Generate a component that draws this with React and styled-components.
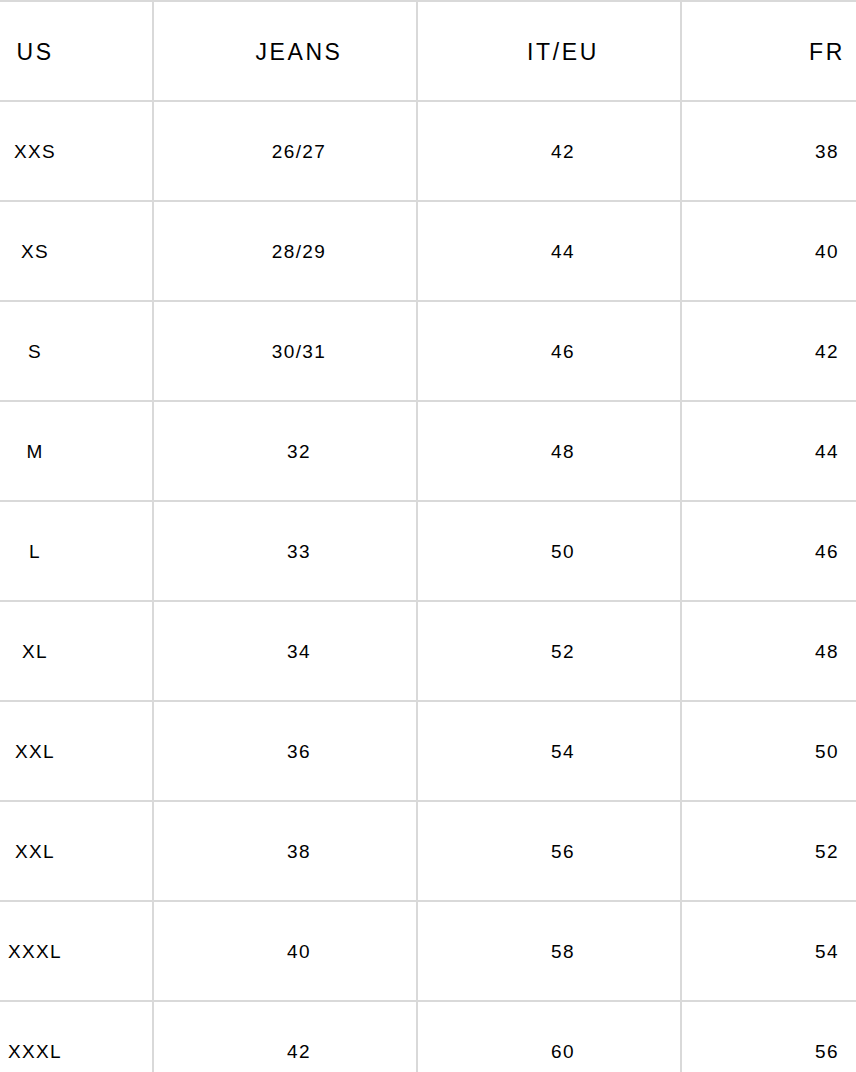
import React from "react";
import styled, { createGlobalStyle } from "styled-components";

const GlobalStyle = createGlobalStyle`
  html, body {
    margin: 0;
    padding: 0;
    background: #fff;
    overflow: hidden;
  }
  body {
    font-family: "Liberation Sans", Arial, sans-serif;
    color: #000;
  }
`;

const Viewport = styled.div`
  width: 856px;
  overflow: hidden;
`;

const SizeGrid = styled.div`
  display: grid;
  grid-template-columns: repeat(4, 264px);
  width: max-content;
  margin-left: -112px;
  border-top: 2px solid #d9d9d9;
  border-left: 2px solid #d9d9d9;
`;

const Cell = styled.div`
  box-sizing: border-box;
  height: 100px;
  display: flex;
  align-items: center;
  justify-content: center;
  padding: 2px 0 0 28px;
  border-right: 2px solid #d9d9d9;
  border-bottom: 2px solid #d9d9d9;
  font-size: ${(props) => (props.head ? "23px" : "19px")};
  letter-spacing: ${(props) => (props.head ? "2.6px" : "1.4px")};
  white-space: nowrap;
`;

const headers = ["US", "JEANS", "IT/EU", "FR"];

const rows = [
  ["XXS", "26/27", "42", "38"],
  ["XS", "28/29", "44", "40"],
  ["S", "30/31", "46", "42"],
  ["M", "32", "48", "44"],
  ["L", "33", "50", "46"],
  ["XL", "34", "52", "48"],
  ["XXL", "36", "54", "50"],
  ["XXL", "38", "56", "52"],
  ["XXXL", "40", "58", "54"],
  ["XXXL", "42", "60", "56"],
];

export default function App() {
  return (
    <>
      <GlobalStyle />
      <Viewport>
        <SizeGrid>
          {headers.map((h) => (
            <Cell head key={h}>
              {h}
            </Cell>
          ))}
          {rows.map((row, i) =>
            row.map((value, j) => <Cell key={`${i}-${j}`}>{value}</Cell>)
          )}
        </SizeGrid>
      </Viewport>
    </>
  );
}
